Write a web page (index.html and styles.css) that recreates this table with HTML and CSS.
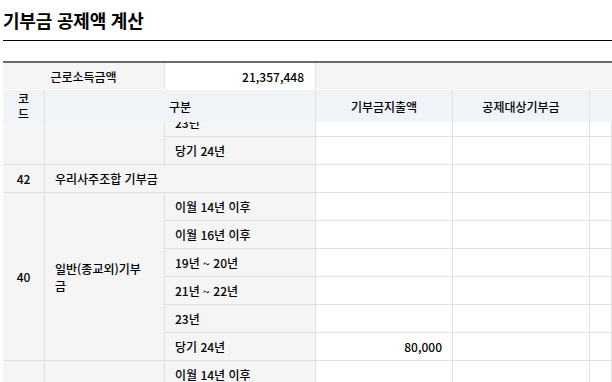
FILE: index.html
```html
<!DOCTYPE html>
<html lang="ko">
<head>
<meta charset="utf-8">
<title>기부금 공제액 계산</title>
<link rel="stylesheet" href="styles.css">
</head>
<body>
<div class="page">
  <h1 class="title">기부금 공제액 계산</h1>
  <div class="table">
    <div class="income-row">
      <div class="cell label">근로소득금액</div>
      <div class="cell value">21,357,448</div>
      <div class="cell fill"></div>
    </div>
    <div class="head-row">
      <div class="hcell code-h">코드</div>
      <div class="hcell">구분</div>
      <div class="hcell">기부금지출액</div>
      <div class="hcell">공제대상기부금</div>
      <div class="hcell last"></div>
    </div>
    <div class="body-clip">
      <div class="body-grid">
        <div class="cell code span2"></div>
        <div class="cell cat span2"></div>
        <div class="cell sub">23년</div>
        <div class="cell value"></div>
        <div class="cell value"></div>
        <div class="cell value"></div>
        <div class="cell sub">당기 24년</div>
        <div class="cell value"></div>
        <div class="cell value"></div>
        <div class="cell value"></div>

        <div class="cell code">42</div>
        <div class="cell cat wide">우리사주조합 기부금</div>
        <div class="cell value"></div>
        <div class="cell value"></div>
        <div class="cell value"></div>

        <div class="cell code span6">40</div>
        <div class="cell cat span6">일반(종교외)기부금</div>
        <div class="cell sub">이월 14년 이후</div>
        <div class="cell value"></div>
        <div class="cell value"></div>
        <div class="cell value"></div>
        <div class="cell sub">이월 16년 이후</div>
        <div class="cell value"></div>
        <div class="cell value"></div>
        <div class="cell value"></div>
        <div class="cell sub">19년 ~ 20년</div>
        <div class="cell value"></div>
        <div class="cell value"></div>
        <div class="cell value"></div>
        <div class="cell sub">21년 ~ 22년</div>
        <div class="cell value"></div>
        <div class="cell value"></div>
        <div class="cell value"></div>
        <div class="cell sub">23년</div>
        <div class="cell value"></div>
        <div class="cell value"></div>
        <div class="cell value"></div>
        <div class="cell sub">당기 24년</div>
        <div class="cell value num">80,000</div>
        <div class="cell value"></div>
        <div class="cell value"></div>

        <div class="cell code span6"></div>
        <div class="cell cat span6"></div>
        <div class="cell sub">이월 14년 이후</div>
        <div class="cell value"></div>
        <div class="cell value"></div>
        <div class="cell value"></div>
      </div>
    </div>
  </div>
</div>
</body>
</html>
```

FILE: styles.css
```css
html, body {
  margin: 0;
  padding: 0;
  background: #fff;
}

body {
  font-family: "Noto Sans CJK KR", "Noto Sans", sans-serif;
  font-size: 12px;
  font-weight: 500;
  color: #000;
}

.page {
  height: 100vh;
  overflow: hidden;
  padding-left: 3px;
}

.title {
  margin: 0;
  padding: 8px 0 8px;
  font-size: 18px;
  letter-spacing: -0.2px;
  line-height: 24px;
  font-weight: 700;
  color: #000;
  border-bottom: 1px solid #000;
}

.table {
  margin-top: 20px;
  border-top: 2px solid #6a6a6a;
}

.cell {
  box-sizing: border-box;
  display: flex;
  align-items: center;
  padding: 0 10px;
  line-height: 17px;
  border-right: 1px solid #e0e0e0;
  border-bottom: 1px solid #e0e0e0;
}

/* income row */
.income-row {
  display: grid;
  grid-template-columns: 162px 151px 1fr;
  height: 27px;
  border-bottom: 1px solid #fff;
  box-sizing: border-box;
}

.income-row .cell {
  border-bottom: none;
}

.income-row .label {
  background: #f5f5f5;
  justify-content: center;
}

.income-row .value {
  background: #fff;
  justify-content: flex-end;
  padding-right: 11px;
}

.income-row .fill {
  background: #f5f5f5;
  border-right: none;
}

/* header row */
.head-row {
  display: grid;
  grid-template-columns: 42px 271px 137px 137px 1fr;
  height: 32px;
  background: #f0f4f9;
}

.hcell {
  box-sizing: border-box;
  display: flex;
  align-items: center;
  justify-content: center;
  text-align: center;
  padding: 0 10px;
  line-height: 15px;
  border-right: 1px solid #e0e0e0;
}

.hcell.last {
  border-right: none;
}

/* body */
.body-clip {
  overflow: hidden;
}

.body-grid {
  display: grid;
  grid-template-columns: 42px 120px 151px 137px 137px 1fr;
  grid-auto-rows: 28px;
  margin-top: -13px;
}

.code {
  background: #f5f5f5;
  justify-content: center;
  padding: 0;
}

.cat {
  background: #f5f5f5;
  padding-right: 22px;
}

.cat.wide {
  grid-column: span 2;
}

.sub {
  background: #f5f5f5;
}

.value {
  background: #fff;
  justify-content: flex-end;
}

.span2 {
  grid-row: span 2;
}

.span6 {
  grid-row: span 6;
}
```
